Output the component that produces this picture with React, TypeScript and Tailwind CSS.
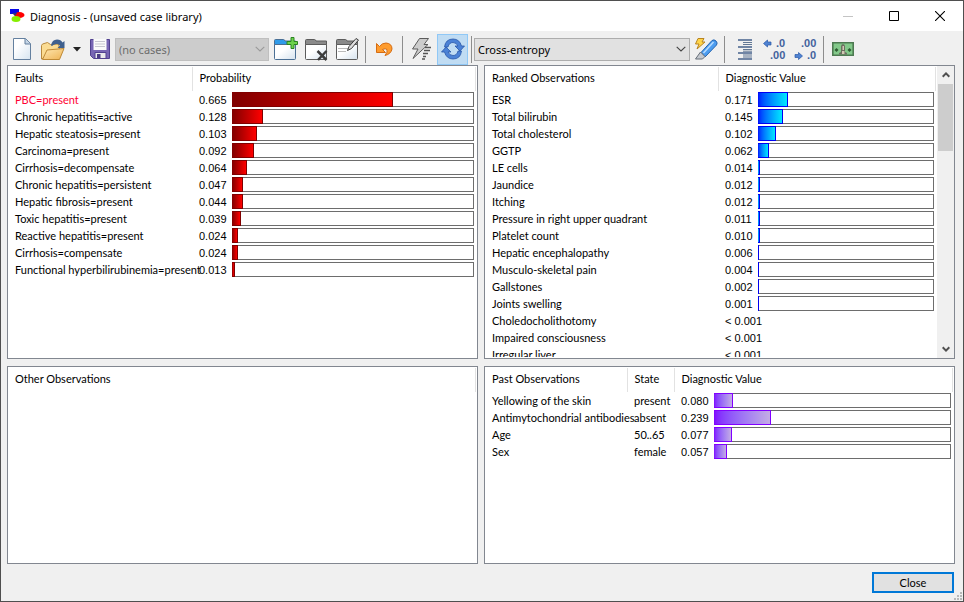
import { useState, type ReactNode } from "react";

interface Fault {
  name: string;
  value: number;
}

interface Observation {
  name: string;
  value: number;
  state?: string;
}

type Tone = "red" | "blue" | "violet";

const faults: Fault[] = [
  { name: "PBC=present", value: 0.665 },
  { name: "Chronic hepatitis=active", value: 0.128 },
  { name: "Hepatic steatosis=present", value: 0.103 },
  { name: "Carcinoma=present", value: 0.092 },
  { name: "Cirrhosis=decompensate", value: 0.064 },
  { name: "Chronic hepatitis=persistent", value: 0.047 },
  { name: "Hepatic fibrosis=present", value: 0.044 },
  { name: "Toxic hepatitis=present", value: 0.039 },
  { name: "Reactive hepatitis=present", value: 0.024 },
  { name: "Cirrhosis=compensate", value: 0.024 },
  { name: "Functional hyperbilirubinemia=present", value: 0.013 },
];

const ranked: Observation[] = [
  { name: "ESR", value: 0.171 },
  { name: "Total bilirubin", value: 0.145 },
  { name: "Total cholesterol", value: 0.102 },
  { name: "GGTP", value: 0.062 },
  { name: "LE cells", value: 0.014 },
  { name: "Jaundice", value: 0.012 },
  { name: "Itching", value: 0.012 },
  { name: "Pressure in right upper quadrant", value: 0.011 },
  { name: "Platelet count", value: 0.01 },
  { name: "Hepatic encephalopathy", value: 0.006 },
  { name: "Musculo-skeletal pain", value: 0.004 },
  { name: "Gallstones", value: 0.002 },
  { name: "Joints swelling", value: 0.001 },
  { name: "Choledocholithotomy", value: 0 },
  { name: "Impaired consciousness", value: 0 },
  { name: "Irregular liver", value: 0 },
];

const past: Observation[] = [
  { name: "Yellowing of the skin", state: "present", value: 0.08 },
  { name: "Antimytochondrial antibodies", state: "absent", value: 0.239 },
  { name: "Age", state: "50..65", value: 0.077 },
  { name: "Sex", state: "female", value: 0.057 },
];

const fills: Record<Tone, string> = {
  red: "border-[#800000] from-[#800000] to-[#ff0000]",
  blue: "border-[#0000f0] from-[#0000ff] to-[#00e8ff]",
  violet: "border-[#8000ff] from-[#8000ff] to-[#c4ace4]",
};

function Bar({ value, tone }: { value: number; tone: Tone }) {
  return (
    <div className="flex h-[15px]">
      <div
        className={`min-w-px shrink-0 border-y border-r bg-linear-to-r ${fills[tone]}`}
        style={{ width: `${value * 100}%` }}
      />
      <div className="flex-1 border-y border-r border-[#6d6d6d]" />
    </div>
  );
}

function TextCell({ children, className = "" }: { children: ReactNode; className?: string }) {
  return <td className={`pt-px pl-[7px] leading-4 ${className}`}>{children}</td>;
}

function ValueCells({ value, tone }: { value: number; tone: Tone }) {
  if (value < 0.001) {
    return (
      <td colSpan={2} className="pt-px pl-[7px] font-['Liberation_Sans',Arial,sans-serif] leading-4">
        &lt; 0.001
      </td>
    );
  }
  return (
    <>
      <TextCell className="font-['Liberation_Sans',Arial,sans-serif]">{value.toFixed(3)}</TextCell>
      <td className="pr-0.5">
        <Bar value={value} tone={tone} />
      </td>
    </>
  );
}

function HeadCell({ children, span }: { children: ReactNode; span?: number }) {
  return (
    <th colSpan={span} className="h-6 border-r border-[#e2e2e2] pb-0.5 pl-[7px] text-left leading-4 font-normal">
      {children}
    </th>
  );
}

function Panel({ children }: { children: ReactNode }) {
  return <section className="flex min-h-0 min-w-0 border border-[#828790] bg-white">{children}</section>;
}

function Chevron({ className }: { className: string }) {
  return (
    <svg viewBox="0 0 10 6" className={`pointer-events-none absolute top-2 right-1 h-1.5 w-2.5 ${className}`}>
      <path d="M.7.8 5 5 9.3.8" fill="none" stroke="currentColor" strokeWidth="1.1" />
    </svg>
  );
}

function Separator() {
  return <div className="h-[27px] w-px shrink-0 bg-[#8d8d8d]" />;
}

function ToolButton({ label, className, children }: { label: string; className: string; children: ReactNode }) {
  return (
    <button type="button" aria-label={label} title={label} className={`flex shrink-0 items-center justify-center ${className}`}>
      {children}
    </button>
  );
}

function FolderIcon({ tab, edge, children }: { tab: string; edge: string; children: ReactNode }) {
  return (
    <svg viewBox="0 0 25 24" className="h-6 w-[25px]">
      <defs>
        <linearGradient id={`sheet-${edge.slice(1)}`} x1="0" y1="0" x2="1" y2="1">
          <stop offset="0.4" stopColor="#fff" />
          <stop offset="1" stopColor="#d5e2ee" />
        </linearGradient>
      </defs>
      <path d="M1.5 8V3.500q0-1 1-1h8q1 0 1.500 1.500h10.500V8z" fill={tab} stroke={edge} />
      <path d="M1.5 7.500h21v14q0 1-1 1h-19q-1 0-1-1z" fill={`url(#sheet-${edge.slice(1)})`} stroke={edge} />
      {children}
    </svg>
  );
}

function Toolbar() {
  const [method, setMethod] = useState("Cross-entropy");
  const [autoUpdate, setAutoUpdate] = useState(true);

  return (
    <div role="toolbar" className="flex h-[34px] shrink-0 items-center pt-0.5 pl-1.5 font-['Noto_Sans','Open_Sans',sans-serif] text-[11px]">
      <ToolButton label="New case library" className="w-[30px]">
        <svg viewBox="0 0 20 24" className="h-6 w-5">
          <defs>
            <linearGradient id="page" x1="0" y1="0" x2="1" y2="1">
              <stop offset="0.3" stopColor="#fff" />
              <stop offset="1" stopColor="#d6e4f0" />
            </linearGradient>
          </defs>
          <path d="M1.5 1.500h12l5 5v16h-17z" fill="url(#page)" stroke="#64809f" />
          <path d="M13 1.500V7h5.500" fill="#c3d4e5" stroke="#64809f" />
        </svg>
      </ToolButton>
      <ToolButton label="Open case library" className="w-8">
        <svg viewBox="0 0 26 24" className="h-6 w-[26px]">
          <defs>
            <linearGradient id="folder" x1="0" y1="0" x2="1" y2="1">
              <stop offset="0" stopColor="#ffe9b4" />
              <stop offset="1" stopColor="#eeb252" />
            </linearGradient>
          </defs>
          <path d="M1.5 22V8.500l1-1.500 5-1.500 3 2 8-.5 1 5z" fill="#fbdc93" stroke="#b98a3e" />
          <path d="M11 8.500Q12 2.500 17 2.500q4 0 5.500 3l2-1.500v7h-7l2.500-2.500q-1.500-2-4-1.500T12 9z" fill="#3f608e" />
          <path d="M2.500 22.500 7 13l17-1.500-4.500 11z" fill="url(#folder)" stroke="#bf8a36" />
        </svg>
      </ToolButton>
      <ToolButton label="Recent case libraries" className="w-4">
        <svg viewBox="0 0 8 5" className="h-[5px] w-2">
          <path d="M0 0h8L4 4.500z" fill="#222" />
        </svg>
      </ToolButton>
      <ToolButton label="Save" className="w-[30px]">
        <svg viewBox="0 0 22 22" className="h-[22px] w-[22px] shrink-0">
          <path d="M1.500 1.500h19v19h-16l-3-3z" fill="#7766b4" stroke="#51418f" />
          <path d="M4.500 1h13v11h-13z" fill="#fafafa" />
          <path d="M6 3.500h10M6 6h10M6 8.500h10" stroke="#c6c6d0" />
          <path d="M6 14.500h11v6H6z" fill="#e9e9ec" stroke="#51418f" />
          <path d="M8 16h3.500v4H8z" fill="#4a3c86" />
        </svg>
      </ToolButton>
      <div className="relative w-[154px] shrink-0">
        <select
          disabled
          aria-label="Case"
          className="block h-[23px] w-full appearance-none border border-[#bfbfbf] bg-[#cccccc] px-[3px] text-[#6d6d6d] opacity-100"
        >
          <option>(no cases)</option>
        </select>
        <Chevron className="text-[#9a9a9a]" />
      </div>
      <ToolButton label="Add case" className="w-8">
        <FolderIcon tab="#2f9bea" edge="#4b6f94">
          <path d="M18 .5h3v4h3.500v3H21v4h-3v-4h-4v-3h4z" fill="#6dd24c" stroke="#2a8420" />
        </FolderIcon>
      </ToolButton>
      <ToolButton label="Delete case" className="w-[31px]">
        <FolderIcon tab="#8a8a8a" edge="#5c5c5c">
          <path d="m13.500 14 9 9m0-9-8.500 9" stroke="#3d3d3d" strokeWidth="2.500" />
        </FolderIcon>
      </ToolButton>
      <ToolButton label="Edit case" className="w-[31px]">
        <FolderIcon tab="#8a8a8a" edge="#5d5d5d">
          <path d="M3 11.500h11M3 14.500h8" stroke="#bbb" />
          <path d="m12.500 13.500 1.500-4 7-8 2.500 1.500-7 8.500z" fill="#ddd" stroke="#3f3f3f" />
        </FolderIcon>
      </ToolButton>
      <div className="w-0.5 shrink-0" />
      <Separator />
      <ToolButton label="Undo" className="w-9">
        <svg viewBox="0 0 18 16" className="h-4 w-[18px]">
          <path
            d="M1.500 2.500v9h9L7.500 8.500q3-1.500 4.500 0 1 2.500-2 6 6-1.500 7-6.500Q17 2.500 11 2 7 2 4.500 5.500z"
            fill="#ff9c2e"
            stroke="#d56c12"
          />
        </svg>
      </ToolButton>
      <Separator />
      <ToolButton label="Update immediately" className="w-[34px] pl-0.5">
        <svg viewBox="0 0 22 24" className="h-6 w-[22px]">
          <path d="M9.500 1.500h9L14 7.500h4l-15 14 5-9.500H2.500z" fill="#ccc" stroke="#5c5c5c" />
          <path d="M15 10.500h6M14 13.500h6M13 16.500h5M13 19.500h3M12 22h3" stroke="#555" strokeWidth="1.500" />
        </svg>
      </ToolButton>
      <button
        type="button"
        aria-label="Automatic update"
        aria-pressed={autoUpdate}
        onClick={() => setAutoUpdate(!autoUpdate)}
        className={`flex h-[31px] w-[31px] shrink-0 items-center justify-center border ${
          autoUpdate ? "border-[#90c8f6] bg-[#c0dcf3]" : "border-transparent"
        }`}
      >
        <svg viewBox="0 0 24 22" className="h-[22px] w-6 shrink-0">
          <g fill="#4b82d6" stroke="#2857a8" strokeWidth="0.8">
            <path d="M3.500 9Q4.500 1 12 1q6.500 0 8.500 7h3L19 13l-5-5h3Q15.500 4.500 12 4.500 8 4.500 7 9z" />
            <path d="M3.500 9Q4.500 1 12 1q6.500 0 8.500 7h3L19 13l-5-5h3Q15.500 4.500 12 4.500 8 4.500 7 9z" transform="rotate(180 12 11)" />
          </g>
        </svg>
      </button>
      <div className="w-[3px] shrink-0" />
      <Separator />
      <div className="relative ml-0.5 w-[216px] shrink-0">
        <select
          aria-label="Diagnostic value measure"
          value={method}
          onChange={(e) => setMethod(e.target.value)}
          className="block h-[23px] w-full appearance-none border border-[#adadad] bg-[#e1e1e1] px-[3px] text-black"
        >
          <option>Cross-entropy</option>
        </select>
        <Chevron className="text-[#444]" />
      </div>
      <ToolButton label="Highlight" className="w-8">
        <svg viewBox="0 0 24 24" className="h-6 w-6">
          <path d="M4 1.500h6L8 5h3l-8 7 2-5H1.500z" fill="#ffd54a" stroke="#b98420" />
          <path d="m7 15.500 11-12q2-1.500 4 .5t.5 4l-11.500 12z" fill="#4d9df0" stroke="#2463ae" />
          <path d="m9.500 16 10-11" stroke="#b7dcff" strokeWidth="1.500" />
          <path d="m6.500 15 4.500 4.500-2.500 2.500H1.500z" fill="#c5c9cf" stroke="#666e78" />
        </svg>
      </ToolButton>
      <div className="w-0.5 shrink-0" />
      <Separator />
      <ToolButton label="Sort by value" className="w-[37px] pl-0.5">
        <svg viewBox="0 0 14 21" className="h-[21px] w-3.5">
          <path d="M0 1h14M0 8h14M0 14h14M0 20h14" stroke="#46618c" strokeWidth="1.6" />
          <path d="M5 3.500h9M5 5.500h9M5 10.500h9M5 12.200h9M5 16h9M5 18h9" stroke="#617795" />
        </svg>
      </ToolButton>
      <ToolButton label="More decimal places" className="w-[26px]">
        <svg viewBox="0 0 24 24" className="h-6 w-6 font-['Liberation_Sans',Arial,sans-serif] text-[11px] font-bold" fill="#44629d">
          <path d="M.5 6.500 4.500 3v2H8v3H4.500v2z" fill="#4f83d2" stroke="#2857a8" strokeWidth="0.7" />
          <text x="13" y="10">.0</text>
          <text x="7" y="22">.00</text>
        </svg>
      </ToolButton>
      <ToolButton label="Fewer decimal places" className="w-[35px]">
        <svg viewBox="0 0 24 24" className="h-6 w-6 font-['Liberation_Sans',Arial,sans-serif] text-[11px] font-bold" fill="#44629d">
          <path d="M8.500 19 4.500 15.500v2H1v3h3.500v2z" fill="#4f83d2" stroke="#2857a8" strokeWidth="0.7" />
          <text x="7" y="10">.00</text>
          <text x="13" y="22">.0</text>
        </svg>
      </ToolButton>
      <Separator />
      <ToolButton label="Costs" className="w-[37px]">
        <svg viewBox="0 0 22 14" className="h-3.5 w-[22px]">
          <path d="M.8.8h20.400v12.400H.8z" fill="#83c98a" stroke="#4d7a51" strokeWidth="1.6" />
          <path d="M7 12.500v-1.500l2-1V4.500Q9 2 11 2t2 2.500V10l2 1v1.500z" fill="#6b6f60" />
          <path d="M10.500 4h1.500v4h-1.500zM10 9h2.500v3H10z" fill="#d3c8b4" />
          <path d="m2.500 8 2-2 2 2-2 2zM15.500 8l2-2 2 2-2 2z" fill="#2e5c32" />
        </svg>
      </ToolButton>
    </div>
  );
}

function TitleBar() {
  return (
    <header className="flex h-[30px] shrink-0 items-center bg-white pl-2 font-['Noto_Sans','Open_Sans',sans-serif] text-[11px]">
      <svg viewBox="0 0 16 16" className="mr-[5px] h-4 w-4">
        <path d="M1 1h9v5H1z" fill="#0808e8" />
        <ellipse cx="10.500" cy="7" rx="5" ry="3" fill="#f00" />
        <ellipse cx="7" cy="11" rx="4.500" ry="3" fill="#86ee00" />
        <path d="m3 5 3 3 2-3z" fill="#303080" />
      </svg>
      <h1 className="grow">Diagnosis - (unsaved case library)</h1>
      <button type="button" disabled aria-label="Minimize" className="flex h-full w-[46px] items-center justify-center">
        <svg viewBox="0 0 10 10" className="h-2.5 w-2.5">
          <path d="M0 5.500h10" stroke="#c4c4c4" />
        </svg>
      </button>
      <button type="button" aria-label="Maximize" className="flex h-full w-[46px] items-center justify-center">
        <svg viewBox="0 0 10 10" className="h-2.5 w-2.5">
          <path d="M.5.5h9v9h-9z" fill="none" stroke="#000" />
        </svg>
      </button>
      <button type="button" aria-label="Close window" className="flex h-full w-[46px] items-center justify-center">
        <svg viewBox="0 0 10 10" className="h-2.5 w-2.5">
          <path d="m0 0 10 10M10 0 0 10" stroke="#000" strokeWidth="1.1" />
        </svg>
      </button>
    </header>
  );
}

function FaultsTable() {
  return (
    <table className="w-full table-fixed">
      <colgroup>
        <col className="w-[184px]" />
        <col className="w-10" />
        <col />
      </colgroup>
      <thead>
        <tr>
          <HeadCell>Faults</HeadCell>
          <HeadCell span={2}>Probability</HeadCell>
        </tr>
      </thead>
      <tbody>
        {faults.map((fault, i) => (
          <tr key={fault.name} className="h-[17px]">
            <TextCell className={i === 0 ? "text-[#ff0033]" : ""}>{fault.name}</TextCell>
            <ValueCells value={fault.value} tone="red" />
          </tr>
        ))}
      </tbody>
    </table>
  );
}

function RankedTable() {
  return (
    <table className="w-full table-fixed">
      <colgroup>
        <col className="w-[233px]" />
        <col className="w-10" />
        <col />
      </colgroup>
      <thead>
        <tr>
          <HeadCell>Ranked Observations</HeadCell>
          <HeadCell span={2}>Diagnostic Value</HeadCell>
        </tr>
      </thead>
      <tbody>
        {ranked.map((row) => (
          <tr key={row.name} className="h-[17px]">
            <TextCell>{row.name}</TextCell>
            <ValueCells value={row.value} tone="blue" />
          </tr>
        ))}
      </tbody>
    </table>
  );
}

function PastTable() {
  return (
    <table className="w-full table-fixed">
      <colgroup>
        <col className="w-[142px]" />
        <col className="w-[47px]" />
        <col className="w-10" />
        <col />
      </colgroup>
      <thead>
        <tr>
          <HeadCell>Past Observations</HeadCell>
          <HeadCell>State</HeadCell>
          <HeadCell span={2}>Diagnostic Value</HeadCell>
        </tr>
      </thead>
      <tbody>
        {past.map((row) => (
          <tr key={row.name} className="h-[17px]">
            <TextCell>{row.name}</TextCell>
            <TextCell>{row.state}</TextCell>
            <ValueCells value={row.value} tone="violet" />
          </tr>
        ))}
      </tbody>
    </table>
  );
}

export default function App() {
  return (
    <div className="flex h-screen flex-col border border-[#4f4f4f] bg-[#f0f0f0] font-['Lato',Arial,sans-serif] text-[11px] leading-[17px] text-black">
      <TitleBar />
      <Toolbar />
      <main className="grid min-h-0 grow grid-cols-2 grid-rows-[294fr_198fr] gap-x-1.5 gap-y-[7px] pr-2 pl-1.5 whitespace-nowrap">
        <Panel>
          <div className="my-px min-w-0 grow pr-px">
            <FaultsTable />
          </div>
        </Panel>
        <Panel>
          <div className="my-px min-w-0 grow overflow-y-auto pr-px [scrollbar-width:none]">
            <RankedTable />
          </div>
          <div className="flex w-[17px] shrink-0 flex-col items-center bg-[#f0f0f0]">
            <svg viewBox="0 0 8 6" className="my-1.5 h-1.5 w-2">
              <path d="m.7 4.700 3.300-3.300 3.300 3.300" fill="none" stroke="#505050" strokeWidth="2" />
            </svg>
            <div className="h-[67px] w-[15px] bg-[#cdcdcd]" />
            <div className="grow" />
            <svg viewBox="0 0 8 6" className="my-1.5 h-1.5 w-2">
              <path d="m.7 1.300 3.300 3.300 3.300-3.300" fill="none" stroke="#505050" strokeWidth="2" />
            </svg>
          </div>
        </Panel>
        <Panel>
          <div className="my-px min-w-0 grow pr-px">
            <table className="w-full table-fixed">
              <thead>
                <tr>
                  <HeadCell>Other Observations</HeadCell>
                </tr>
              </thead>
            </table>
          </div>
        </Panel>
        <Panel>
          <div className="my-px min-w-0 grow pr-px">
            <PastTable />
          </div>
        </Panel>
      </main>
      <footer className="flex h-[37px] shrink-0 items-end justify-end">
        <button type="button" className="mb-2 h-[21px] w-[82px] border-2 border-[#0078d7] bg-[#e1e1e1] leading-none">
          Close
        </button>
        <svg viewBox="0 0 9 9" className="h-[9px] w-[9px]">
          <path d="M6 0h2v2H6zM3 3h2v2H3zM6 3h2v2H6zM0 6h2v2H0zM3 6h2v2H3zM6 6h2v2H6z" fill="#b8b8b8" />
        </svg>
      </footer>
    </div>
  );
}
